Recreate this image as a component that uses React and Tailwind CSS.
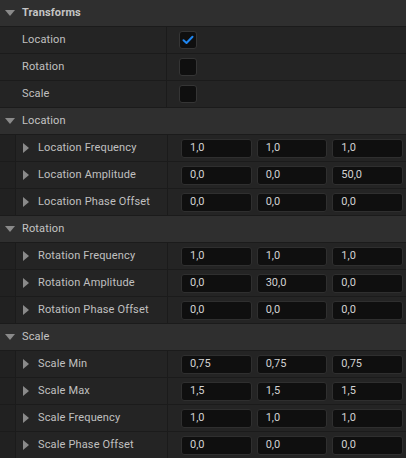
import React from 'react';

const FONT = { fontFamily: 'Roboto, "Liberation Sans", sans-serif' };

function DownTri() {
  return (
    <svg width="10" height="6" viewBox="0 0 10 6" className="shrink-0">
      <path d="M0 0 L10 0 L5 6 Z" fill="#8a8a8a" />
    </svg>
  );
}

function RightTri() {
  return (
    <svg width="6" height="10" viewBox="0 0 6 10" className="shrink-0">
      <path d="M0 0 L6 5 L0 10 Z" fill="#8a8a8a" />
    </svg>
  );
}

function Header({ title, bold }) {
  return (
    <div className="flex items-center h-[27px] bg-[#2f2f2f] border-b border-[#1b1b1b] pl-[5px]">
      <DownTri />
      <span className={`ml-[7px] text-[11px] tracking-[0.15px] text-[#c4c4c4] ${bold ? 'font-bold' : ''}`}>{title}</span>
    </div>
  );
}

function Checkbox({ checked }) {
  return (
    <div className="w-[18px] h-[18px] rounded-[3px] bg-[#0f0f0f] border border-[#353535] flex items-center justify-center">
      {checked && (
        <svg width="12" height="10" viewBox="0 0 12 10">
          <path d="M1.5 5.2 L4.5 8 L10.5 1.8" fill="none" stroke="#1f86f0" strokeWidth="2" strokeLinecap="round" strokeLinejoin="round" />
        </svg>
      )}
    </div>
  );
}

function CheckRow({ label, checked }) {
  return (
    <div className="flex h-[27px] bg-[#242424] border-b border-[#1b1b1b]">
      <div className="w-[167px] flex items-center pl-[22px] text-[11px] tracking-[0.15px] text-[#c0c0c0] border-r border-[#1b1b1b]">{label}</div>
      <div className="flex-1 flex items-center pl-[12px]">
        <Checkbox checked={checked} />
      </div>
    </div>
  );
}

function VecRow({ label, values }) {
  return (
    <div className="flex h-[27px] bg-[#242424] border-b border-[#1b1b1b]">
      <div className="w-[16px] bg-[#212121] border-r border-[#1b1b1b]" />
      <div className="w-[152px] flex items-center pl-[7px] border-r border-[#1b1b1b]">
        <RightTri />
        <span className="ml-[9px] text-[11px] tracking-[0.15px] text-[#c0c0c0] whitespace-nowrap">{label}</span>
      </div>
      <div className="flex-1 flex items-center gap-[5px] pl-[13px] pr-[3px]">
        {values.map((v, i) => (
          <div key={i} className="flex-1 h-[19px] rounded-[3px] bg-[#0f0f0f] border border-[#2f2f2f] flex items-center pl-[8px] text-[11px] text-[#d2d2d2]">
            {v}
          </div>
        ))}
      </div>
    </div>
  );
}

const sections = [
  {
    title: 'Location',
    rows: [
      { label: 'Location Frequency', values: ['1,0', '1,0', '1,0'] },
      { label: 'Location Amplitude', values: ['0,0', '0,0', '50,0'] },
      { label: 'Location Phase Offset', values: ['0,0', '0,0', '0,0'] },
    ],
  },
  {
    title: 'Rotation',
    rows: [
      { label: 'Rotation Frequency', values: ['1,0', '1,0', '1,0'] },
      { label: 'Rotation Amplitude', values: ['0,0', '30,0', '0,0'] },
      { label: 'Rotation Phase Offset', values: ['0,0', '0,0', '0,0'] },
    ],
  },
  {
    title: 'Scale',
    rows: [
      { label: 'Scale Min', values: ['0,75', '0,75', '0,75'] },
      { label: 'Scale Max', values: ['1,5', '1,5', '1,5'] },
      { label: 'Scale Frequency', values: ['1,0', '1,0', '1,0'] },
      { label: 'Scale Phase Offset', values: ['0,0', '0,0', '0,0'] },
    ],
  },
];

export default function App() {
  return (
    <div className="w-[406px] h-[458px] overflow-hidden bg-[#1b1b1b]" style={FONT}>
      <Header title="Transforms" bold />
      <CheckRow label="Location" checked />
      <CheckRow label="Rotation" />
      <CheckRow label="Scale" />
      {sections.map(s => (
        <div key={s.title}>
          <Header title={s.title} />
          {s.rows.map(r => <VecRow key={r.label} label={r.label} values={r.values} />)}
        </div>
      ))}
    </div>
  );
}
